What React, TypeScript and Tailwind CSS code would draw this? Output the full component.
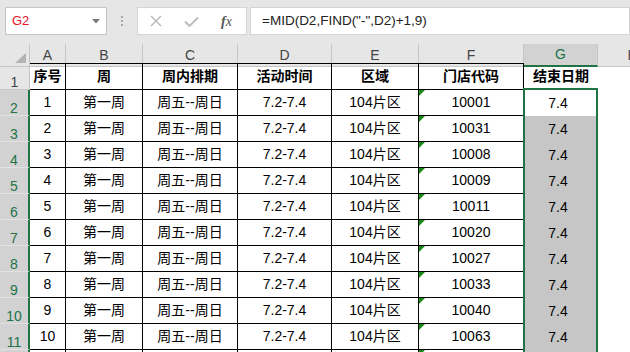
import React from "react";

const FONT = { fontFamily: '"Liberation Sans", "Noto Sans CJK SC", sans-serif' };

const GRID = "grid grid-cols-[30px_36px_77px_95px_94px_87px_105px_74px_70px]";
const GREEN = "#217346";

const codes = ["10001", "10031", "10008", "10009", "10011", "10020", "10027", "10033", "10040", "10063"];

const rows = codes.map((code, i) => ({
  no: String(i + 1),
  week: "第一周",
  span: "周五--周日",
  time: "7.2-7.4",
  area: "104片区",
  code,
  end: "7.4",
}));

// row 12 is only a sliver at the bottom edge
const blank = { no: "", week: "", span: "", time: "", area: "", code: "", end: "" };

function TextFlag() {
  // green "number stored as text" corner mark
  return (
    <svg className="absolute left-0 top-0" width="6" height="6" viewBox="0 0 6 6">
      <polygon points="0,0 6,0 0,6" fill="#158a15" />
    </svg>
  );
}

function Toolbar() {
  return (
    <div className="flex h-[44px] items-start bg-[#e6e6e6] pt-[7px]">
      {/* Name box */}
      <div className="ml-[5px] flex h-[28px] w-[102px] items-center justify-between border border-[#c6c6c6] bg-white pl-[6px] pr-[6px]">
        <span className="text-[13px] text-[#e81123]">G2</span>
        <svg width="8" height="5" viewBox="0 0 8 5">
          <polygon points="0,0 8,0 4,4.5" fill="#7a7a7a" />
        </svg>
      </div>

      <div className="flex h-[28px] w-[30px] flex-col items-center justify-center gap-[2px]">
        <span className="h-[2px] w-[2px] bg-[#a6a6a6]" />
        <span className="h-[2px] w-[2px] bg-[#a6a6a6]" />
        <span className="h-[2px] w-[2px] bg-[#a6a6a6]" />
      </div>

      {/* Cancel / enter / fx */}
      <div className="flex h-[28px] w-[110px] items-center border border-[#d4d4d4] bg-white">
        <svg className="ml-[12px]" width="12" height="12" viewBox="0 0 12 12">
          <path d="M1 1 L11 11 M11 1 L1 11" stroke="#b4b4b4" strokeWidth="1.3" fill="none" />
        </svg>
        <svg className="ml-[22px]" width="15" height="11" viewBox="0 0 15 11">
          <path d="M1 5.5 L5.5 10 L14 1.5" stroke="#bdbdbd" strokeWidth="2" fill="none" />
        </svg>
        <span
          className="ml-[22px] text-[14px] italic text-[#555]"
          style={{ fontFamily: '"Liberation Serif", "DejaVu Serif", serif' }}
        >
          <span className="font-bold">f</span>x
        </span>
      </div>

      {/* Formula input */}
      <div className="ml-[3px] flex h-[28px] flex-1 items-center border border-[#d4d4d4] bg-white pl-[11px]">
        <span className="text-[13.5px] text-[#222]">=MID(D2,FIND("-",D2)+1,9)</span>
      </div>
    </div>
  );
}

function ColumnHeaders() {
  const letters = ["A", "B", "C", "D", "E", "F", "G", "H"];
  return (
    <div className={`${GRID} h-[19px]`}>
      <div className="relative border-b border-r border-[#c6c6c6] bg-[#e6e6e6]">
        <svg className="absolute bottom-[3px] right-[3px]" width="11" height="10" viewBox="0 0 11 10">
          <polygon points="11,0 11,10 0,10" fill="#b4b4b4" />
        </svg>
      </div>
      {letters.map((l) =>
        l === "G" ? (
          <div
            key={l}
            className="flex items-center justify-center border-r border-b-2 border-r-[#c6c6c6] border-b-[#217346] bg-[#d2d2d2] text-[14px] text-[#217346]"
          >
            {l}
          </div>
        ) : (
          <div
            key={l}
            className="flex items-center justify-center border-b border-r border-[#c6c6c6] bg-[#e6e6e6] text-[14px] text-[#444]"
          >
            {l}
          </div>
        )
      )}
    </div>
  );
}

function HeaderRow() {
  const heads = ["序号", "周", "周内排期", "活动时间", "区域", "门店代码"];
  return (
    <div className={`${GRID} h-[27px]`}>
      <div className="flex items-end justify-center border-b border-r border-[#c6c6c6] bg-[#e6e6e6] text-[14px] leading-[14px] text-[#444]">
        1
      </div>
      {heads.map((h) => (
        <div
          key={h}
          className="flex items-center justify-center border-y border-r border-black text-[14px] font-bold text-black"
        >
          {h}
        </div>
      ))}
      <div className="flex items-center justify-center text-[14px] font-bold text-black">结束日期</div>
      <div />
    </div>
  );
}

function DataRow({ r, index, last }: { r: typeof blank; index: number; last?: boolean }) {
  const cell = "flex items-center justify-center border-b border-r border-black text-[14px] text-black";
  const active = index === 0;
  return (
    <div className={`${GRID} h-[26px]`}>
      <div className="flex items-end justify-center border-b border-r-2 border-b-[#e1e1e1] border-r-[#217346] bg-[#d2d2d2] text-[14px] leading-[14px] text-[#217346]">
        {last ? "" : index + 2}
      </div>
      <div className={cell}>{r.no}</div>
      <div className={cell}>{r.week}</div>
      <div className={cell}>{r.span}</div>
      <div className={cell}>{r.time}</div>
      <div className={cell}>{r.area}</div>
      <div className={`${cell} relative`}>
        <TextFlag />
        {r.code}
      </div>
      <div
        className={`flex items-center justify-center pr-[6px] text-[14px] text-black ${
          active ? "bg-white" : "bg-[#c6c6c6]"
        }`}
      >
        {r.end}
      </div>
      <div />
    </div>
  );
}

export default function App() {
  return (
    <div className="h-[352px] w-[630px] overflow-hidden bg-white" style={FONT}>
      <Toolbar />
      <div className="relative">
        <ColumnHeaders />
        <HeaderRow />
        {rows.map((r, i) => (
          <DataRow key={i} r={r} index={i} />
        ))}
        <DataRow r={blank} index={rows.length} last />
        {/* selection outline G2:G12 */}
        <div
          className="pointer-events-none absolute left-[523px] top-[44px] h-[320px] w-[75px] border-2"
          style={{ borderColor: GREEN }}
        />
      </div>
    </div>
  );
}
